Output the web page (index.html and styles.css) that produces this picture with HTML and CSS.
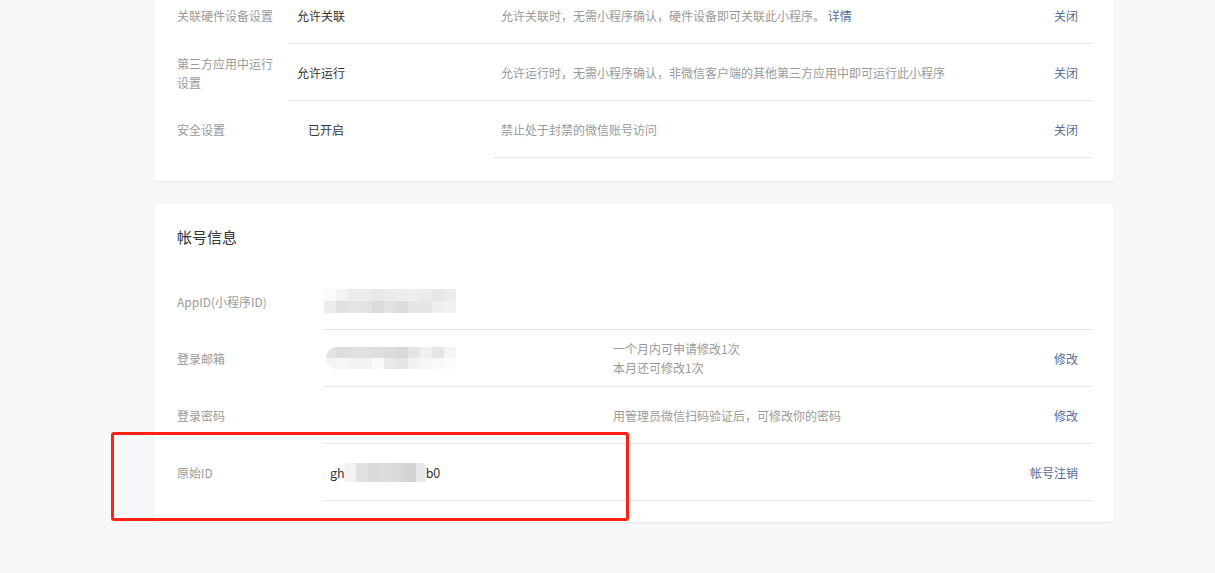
FILE: index.html
```html
<!DOCTYPE html>
<html lang="zh-CN">
<head>
<meta charset="utf-8">
<title>设置</title>
<link rel="stylesheet" href="styles.css">
</head>
<body>
<div class="page">
  <section class="card card-func">
    <div class="row">
      <div class="label">关联硬件设备设置</div>
      <div class="cells">
        <div class="value">允许关联</div>
        <div class="desc">允许关联时，无需小程序确认，硬件设备即可关联此小程序。 <a class="link">详情</a></div>
        <a class="action">关闭</a>
      </div>
    </div>
    <div class="row">
      <div class="label">第三方应用中运行设置</div>
      <div class="cells">
        <div class="value">允许运行</div>
        <div class="desc">允许运行时，无需小程序确认，非微信客户端的其他第三方应用中即可运行此小程序</div>
        <a class="action">关闭</a>
      </div>
    </div>
    <div class="row">
      <div class="label">安全设置</div>
      <div class="value value-free">已开启</div>
      <div class="cells">
        <div class="desc">禁止处于封禁的微信账号访问</div>
        <a class="action">关闭</a>
      </div>
    </div>
  </section>

  <section class="card card-account">
    <h2 class="title">帐号信息</h2>
    <div class="row">
      <div class="label">AppID(小程序ID)</div>
      <div class="cells">
        <div class="value"><span class="mosaic mosaic-appid"></span></div>
        <div class="desc"></div>
      </div>
    </div>
    <div class="row">
      <div class="label">登录邮箱</div>
      <div class="cells">
        <div class="value"><span class="mosaic mosaic-mail"></span></div>
        <div class="desc">一个月内可申请修改1次<br>本月还可修改1次</div>
        <a class="action">修改</a>
      </div>
    </div>
    <div class="row">
      <div class="label">登录密码</div>
      <div class="cells">
        <div class="value"></div>
        <div class="desc">用管理员微信扫码验证后，可修改你的密码</div>
        <a class="action">修改</a>
      </div>
    </div>
    <div class="row">
      <div class="label">原始ID</div>
      <div class="cells">
        <div class="value value-id">gh<span class="mosaic mosaic-id"></span>b0</div>
        <div class="desc"></div>
        <a class="action">帐号注销</a>
      </div>
    </div>
  </section>
</div>
<div class="highlight"></div>
</body>
</html>
```

FILE: styles.css
```css
html, body {
  margin: 0;
  padding: 0;
}
body {
  background: #f6f7f9;
  font-family: "Noto Sans CJK SC", "Noto Sans", sans-serif;
  font-size: 12px;
  color: #353535;
  overflow: hidden;
  height: 573px;
  position: relative;
}
.page {
  width: 960px;
  margin-left: 154px;
  display: flex;
  flex-direction: column;
  gap: 23px;
}
.card {
  background: #fff;
  border-radius: 4px;
  box-shadow: 0 1px 2px rgba(0, 0, 0, 0.07);
  padding: 0 22px 21px 23px;
}
.card-func {
  margin-top: -13px;
  padding-bottom: 23px;
}
.card-account {
  padding-top: 22px;
}
.title {
  margin: 0 0 25px;
  font-size: 15px;
  font-weight: normal;
  line-height: 22px;
  color: #353535;
}
.row {
  display: flex;
  height: 57px;
}
.label {
  width: 102px;
  padding-right: 10px;
  flex: none;
  display: flex;
  align-items: center;
  color: #9a9a9a;
  line-height: 19px;
}
.cells {
  flex: 1;
  display: flex;
  align-items: center;
  border-bottom: 1px solid #e7e7eb;
}
.value {
  width: 196px;
  padding-left: 8px;
  flex: none;
  color: #353535;
}
.value-free {
  display: flex;
  align-items: center;
  padding-left: 19px;
  width: 185px;
}
.desc {
  flex: 1;
  padding-left: 8px;
  color: #9a9a9a;
  line-height: 19px;
}
.link {
  color: #576b95;
}
.action {
  flex: none;
  padding-right: 14px;
  color: #576b95;
  cursor: pointer;
}

/* account card columns */
.card-account .label {
  width: 136px;
}
.card-account .value {
  width: 290px;
  padding-left: 0;
  display: flex;
  align-items: center;
}
.card-account .desc {
  padding-left: 0;
}
.card-account .value.value-id {
  padding-left: 7px;
  width: 283px;
  font-size: 12.5px;
  color: #353535;
}

/* pixelated blur blocks */
.mosaic {
  display: inline-block;
}
.mosaic-appid {
  width: 132px;
  height: 24px;
  margin-left: 1px;
  background:
    linear-gradient(to right,
      #fafafa 0 12px, #f3f3f3 12px 24px, #ebebeb 24px 36px, #ebebeb 36px 48px,
      #e8e8e8 48px 60px, #eaeaea 60px 72px, #ededed 72px 84px, #eeeeee 84px 96px,
      #ebebeb 96px 108px, #e6e6e6 108px 120px, #ebebeb 120px 132px) top / 100% 12px no-repeat,
    linear-gradient(to right,
      #ececec 0 12px, #e0e0e0 12px 24px, #e4e4e4 24px 36px, #e3e3e3 36px 48px,
      #dcdcdc 48px 60px, #e2e2e2 60px 72px, #dcdcdc 72px 84px, #e6e6e6 84px 96px,
      #e6e6e6 96px 108px, #efefef 108px 120px, #f1f1f1 120px 132px) bottom / 100% 12px no-repeat;
}
.mosaic-mail {
  width: 130px;
  height: 22px;
  margin-left: 3px;
  border-radius: 11px 0 0 11px;
  background:
    linear-gradient(to right,
      #e5e5e5 0 10px, #dddddd 10px 22px, #e0e0e0 22px 34px, #e0e0e0 34px 46px,
      #dfdfdf 46px 58px, #dcdcdc 58px 70px, #d8d8d8 70px 82px, #e4e4e4 82px 94px,
      #f0f0f0 94px 106px, #e5e5e5 106px 118px, #f4f4f4 118px 130px) top / 100% 11px no-repeat,
    linear-gradient(to right,
      #f3f3f3 0 10px, #f6f6f6 10px 22px, #f3f3f3 22px 34px, #f3f3f3 34px 46px,
      #fafafa 46px 58px, #e9e9e9 58px 70px, #e4e4e4 70px 82px, #f1f1f1 82px 94px,
      #f6f6f6 94px 106px, #f9f9f9 106px 118px, #fcfcfc 118px 130px) bottom / 100% 11px no-repeat;
}
.mosaic-id {
  width: 82px;
  height: 19px;
  margin-left: -1px;
  vertical-align: middle;
  background: linear-gradient(to right,
    #f2f2f2 0 12px, #e0e0e0 12px 24px, #dadada 24px 36px, #dddddd 36px 48px,
    #d9d9d9 48px 60px, #d4d4d4 60px 72px, #e8e8e8 72px 82px);
  border-radius: 4px 4px 0 0;
}

/* annotation overlay */
.highlight {
  position: absolute;
  left: 111px;
  top: 432px;
  width: 512px;
  height: 83px;
  border: 3px solid #ff2115;
  border-radius: 3px;
  pointer-events: none;
}
```
